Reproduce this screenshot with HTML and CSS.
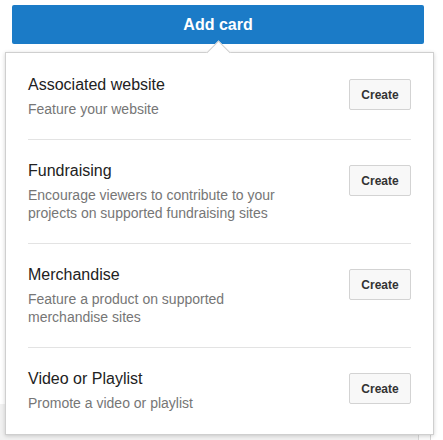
FILE: index.html
```html
<!DOCTYPE html>
<html>
<head>
<meta charset="utf-8">
<link rel="stylesheet" href="styles.css">
</head>
<body>
<div class="page">
  <button class="add-btn">Add card</button>
  <div class="underlay">
    <div class="underlay-fill"></div>
    <div class="underlay-box"></div>
  </div>
</div>
<div class="popup">
  <div class="arrow"></div>
  <div class="row first">
    <div class="text">
      <div class="title">Associated website</div>
      <div class="desc">Feature your website</div>
    </div>
    <button class="create">Create</button>
  </div>
  <div class="row">
    <div class="text">
      <div class="title">Fundraising</div>
      <div class="desc">Encourage viewers to contribute to your projects on supported fundraising sites</div>
    </div>
    <button class="create">Create</button>
  </div>
  <div class="row">
    <div class="text">
      <div class="title">Merchandise</div>
      <div class="desc">Feature a product on supported merchandise sites</div>
    </div>
    <button class="create">Create</button>
  </div>
  <div class="row last">
    <div class="text">
      <div class="title">Video or Playlist</div>
      <div class="desc">Promote a video or playlist</div>
    </div>
    <button class="create">Create</button>
  </div>
</div>
</body>
</html>
```
FILE: styles.css
```css
html, body {
  margin: 0;
  padding: 0;
  background: #fff;
  font-family: "Liberation Sans", Arial, sans-serif;
  overflow: hidden;
}
.page {
  width: 443px;
  height: 440px;
  padding-top: 5px;
  box-sizing: border-box;
}
.add-btn {
  display: block;
  margin-left: 12px;
  width: 412px;
  height: 39px;
  border: none;
  border-radius: 2px;
  background: #1b7bc7;
  color: #fff;
  font-family: "Liberation Sans", Arial, sans-serif;
  font-weight: bold;
  font-size: 16px;
  padding: 0;
}
.underlay {
  margin-top: 360px;
  height: 36px;
  display: flex;
}
.underlay-fill {
  width: 418px;
  background: #f1f1f1;
}
.underlay-box {
  width: 11px;
  border-left: 1px solid #d6d6d6;
  border-right: 1px solid #d6d6d6;
  background: #fafafa;
}
.popup {
  position: absolute;
  left: 5px;
  top: 52px;
  width: 429px;
  box-sizing: border-box;
  background: #fff;
  border: 1px solid #cfcfcf;
  box-shadow: 0 1px 4px rgba(0, 0, 0, 0.18);
}
.arrow {
  position: absolute;
  left: 204px;
  top: -9px;
  width: 16px;
  height: 16px;
  background: #fff;
  border-left: 1px solid #cfcfcf;
  border-top: 1px solid #cfcfcf;
  transform: rotate(45deg);
}
.row {
  position: relative;
  display: flex;
  justify-content: space-between;
  align-items: flex-start;
  margin: 0 22px;
  padding: 21px 0;
  border-bottom: 1px solid #e3e3e3;
}
.row.first {
  padding-top: 22px;
}
.row.last {
  border-bottom: none;
  padding-bottom: 22px;
}
.text {
  width: 280px;
}
.title {
  font-size: 16px;
  line-height: 20px;
  color: #222;
  margin-bottom: 5px;
}
.desc {
  font-size: 14px;
  line-height: 18px;
  color: #767676;
}
.create {
  margin-top: 4px;
  width: 62px;
  height: 31px;
  padding: 0;
  background: #f8f8f8;
  border: 1px solid #d3d3d3;
  border-radius: 2px;
  color: #333;
  font-family: "Liberation Sans", Arial, sans-serif;
  font-weight: bold;
  font-size: 12px;
}
```
